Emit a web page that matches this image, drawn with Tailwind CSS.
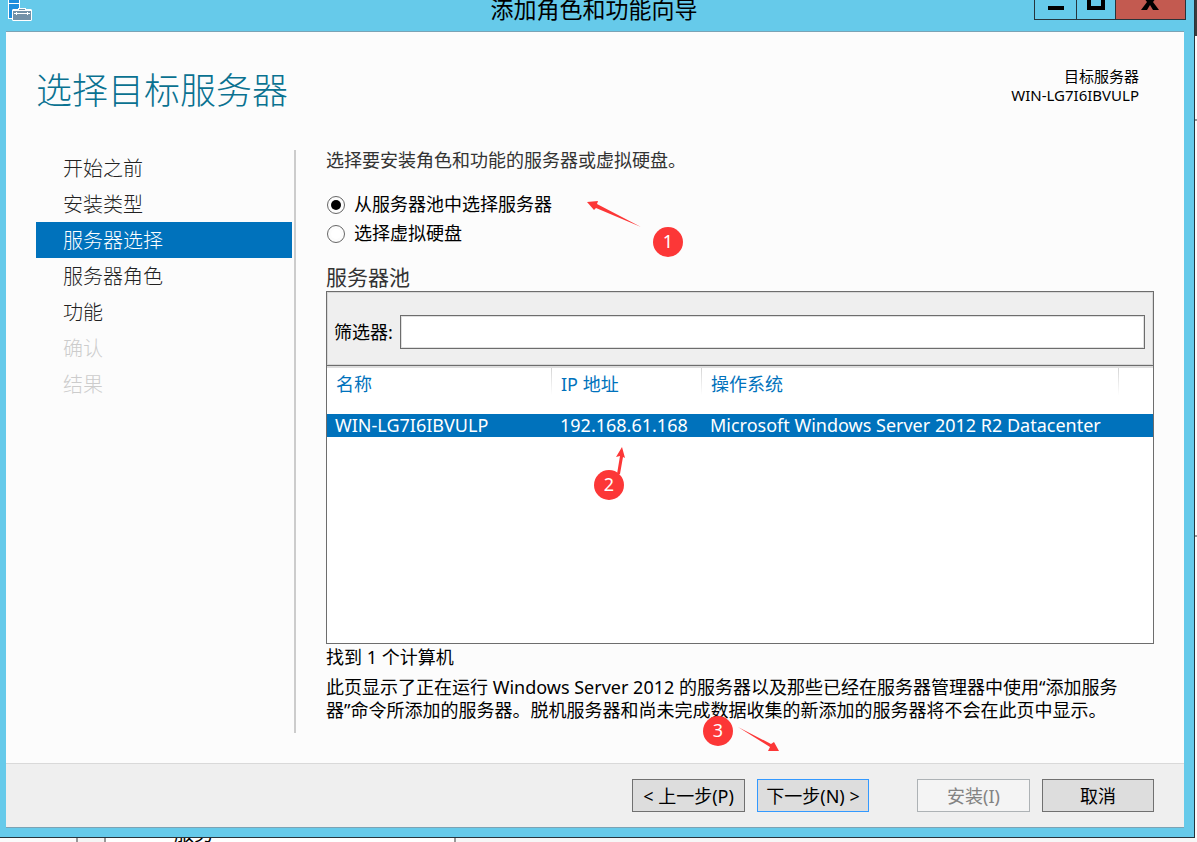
<!DOCTYPE html>
<html lang="zh-CN">
<head>
<meta charset="utf-8">
<title>添加角色和功能向导</title>
<script src="https://cdn.jsdelivr.net/npm/@tailwindcss/browser@4"></script>
</head>
<body class="relative flex h-screen flex-col overflow-hidden bg-[#fbfbfb] font-['Noto_Sans','Noto_Sans_CJK_SC',sans-serif] text-lg text-black">
  <div class="absolute top-0 right-0 h-9 w-[2px] bg-[#3c3c3c]"></div>
  <div class="absolute top-[119px] right-0 h-[2px] w-[2px] bg-[#999]"></div>
  <div class="absolute top-[535px] right-0 h-[2px] w-[2px] bg-[#999]"></div>

  <div class="mr-[2px] flex min-h-0 flex-1 flex-col border-r border-b border-[#26343c] bg-[#66caea]">
    <!-- Title bar -->
    <header class="grid h-[31px] shrink-0 grid-cols-[1fr_auto_1fr] items-start pr-[6px]">
      <svg class="ml-2 h-[22px] w-6" viewBox="0 0 24 22" aria-hidden="true">
        <path d="M0 0h12v19H0z" fill="#fff"/>
        <path d="M1 0h10v3H1zM1 4h10v14H1z" fill="#1e8ede"/>
        <path d="M4 10l1-1h5V8h8v1h5l1 1v10l-1 1H5l-1-1z" fill="#fff"/>
        <path d="M11 9h6v1h-6zM5 11h18v9H5z" fill="#7391a8"/>
        <path d="M6 13h16v1H6zM8 12h1v3H8zM19 12h1v3h-1z" fill="#fff"/>
      </svg>
      <h1 class="text-[23px] leading-[19px]">添加角色和功能向导</h1>
      <div class="mr-[2px] flex h-5 justify-self-end border-x border-b border-[#26343c]">
        <button type="button" aria-label="最小化" class="w-[42px] border-r border-[#26343c]">
          <svg class="h-[19px] w-full" viewBox="0 0 41 19"><path d="M13 6h16v4H13z"/></svg>
        </button>
        <button type="button" aria-label="最大化" class="w-[39px] border-r border-[#26343c]">
          <svg class="h-[19px] w-full" viewBox="0 0 38 19"><path d="M10-6h18v16H10zM14-2v8h10v-8z" fill-rule="evenodd"/></svg>
        </button>
        <button type="button" aria-label="关闭" class="w-[69px] bg-[#c35a50]">
          <svg class="h-[19px] w-full" viewBox="0 0 69 19"><path d="M25-6h6l3 6 3-6h6l-6 8 6 8h-6l-3-5-3 5h-6l6-8z"/></svg>
        </button>
      </div>
    </header>

    <!-- Wizard page -->
    <div class="relative mr-[10px] mb-[9px] ml-[6px] flex min-h-0 flex-1 flex-col border-y border-[#7ba3b5] bg-[#fcfcfc]">
      <div class="flex h-[118px] shrink-0 items-start justify-between pr-[45px] pl-[30px]">
        <h2 class="pt-9 text-4xl leading-[46px] font-light text-[#0a7291]">选择目标服务器</h2>
        <p class="pt-[35px] text-right text-[15px] leading-[19px]">目标服务器<br>WIN-LG7I6IBVULP</p>
      </div>

      <div class="flex min-h-0 flex-1 px-[30px]">
        <nav class="mb-[30px] w-[260px] shrink-0 border-r-2 border-[#ccc] pr-[2px]">
          <ul class="text-xl leading-[34px] font-light text-[#222]">
            <li><a href="#" class="block pt-[2px] pl-[27px]">开始之前</a></li>
            <li><a href="#" class="block pt-[2px] pl-[27px]">安装类型</a></li>
            <li><a href="#" aria-current="step" class="block bg-[#0072bc] pt-[2px] pl-[27px] text-white">服务器选择</a></li>
            <li><a href="#" class="block pt-[2px] pl-[27px]">服务器角色</a></li>
            <li><a href="#" class="block pt-[2px] pl-[27px]">功能</a></li>
            <li><a aria-disabled="true" class="block pt-[2px] pl-[27px] text-[#ccc]">确认</a></li>
            <li><a aria-disabled="true" class="block pt-[2px] pl-[27px] text-[#ccc]">结果</a></li>
          </ul>
        </nav>

        <main class="ml-[30px] flex min-w-0 flex-1 flex-col pb-[41px]">
          <p class="leading-5 text-[#333]">选择要安装角色和功能的服务器或虚拟硬盘。</p>
          <fieldset class="mt-5 leading-[29px]">
            <label class="flex items-center gap-[9px]">
              <input type="radio" name="source" checked class="ml-[1px] size-[18px] appearance-none rounded-full border border-[#666] bg-white bg-clip-content p-[3px] checked:bg-black">
              从服务器池中选择服务器
            </label>
            <label class="flex items-center gap-[9px]">
              <input type="radio" name="source" class="ml-[1px] size-[18px] appearance-none rounded-full border border-[#666] bg-white bg-clip-content p-[3px] checked:bg-black">
              选择虚拟硬盘
            </label>
          </fieldset>
          <h3 class="mt-4 text-[21px] leading-[26px] text-[#333]">服务器池</h3>

          <section class="mt-[1px] min-h-0 flex-1 border border-[#6d6d6d] bg-white">
            <div class="flex h-[74px] items-center border-b border-[#6d6d6d] bg-[#efefef] pt-[6px] pr-2 pl-[7px] inset-ring inset-ring-[#d8d8d8]">
              <label for="filter" class="w-[66px] shrink-0">筛选器:</label>
              <input id="filter" type="text" class="h-[34px] min-w-0 flex-1 border border-[#6d6d6d] bg-white px-2 inset-ring inset-ring-[#e0e0e0]">
            </div>
            <table class="w-full table-fixed border-collapse text-left">
              <colgroup><col class="w-[225px]"><col class="w-[150px]"><col><col class="w-[34px]"></colgroup>
              <thead class="border-t-2 border-[#ddd] text-[#0072bc]">
                <tr class="h-[47px] align-top leading-[33px]">
                  <th class="bg-linear-to-b from-[#d5d5d5] to-white to-60% bg-[length:1px_100%] bg-right bg-no-repeat pl-[9px] font-normal">名称</th>
                  <th class="bg-linear-to-b from-[#d5d5d5] to-white to-60% bg-[length:1px_100%] bg-right bg-no-repeat pl-[9px] font-normal">IP 地址</th>
                  <th class="bg-linear-to-b from-[#d5d5d5] to-white to-60% bg-[length:1px_100%] bg-right bg-no-repeat pl-[9px] font-normal">操作系统</th>
                  <td></td>
                </tr>
              </thead>
              <tbody>
                <tr class="h-[23px] bg-[#0072bc] leading-[23px] whitespace-nowrap text-white">
                  <td class="pl-2">WIN-LG7I6IBVULP</td>
                  <td class="pl-2">192.168.61.168</td>
                  <td class="pl-2">Microsoft Windows Server 2012 R2 Datacenter</td>
                  <td></td>
                </tr>
              </tbody>
            </table>
          </section>

          <p class="mt-[2px] leading-[23px]">找到 1 个计算机</p>
          <p class="mt-[7px] leading-[23px]">此页显示了正在运行 Windows Server 2012 的服务器以及那些已经在服务器管理器中使用“添加服务<br>器”命令所添加的服务器。脱机服务器和尚未完成数据收集的新添加的服务器将不会在此页中显示。</p>
        </main>
      </div>

      <footer class="flex h-16 shrink-0 items-center justify-end gap-3 border-t border-[#d9d9d9] bg-[#efefef] pr-[30px]">
        <button type="button" class="h-[33px] w-[113px] border border-[#707070] bg-[#ddd]">&lt; 上一步(P)</button>
        <button type="button" class="h-[33px] w-[112px] border border-[#3399ff] bg-[#ddd]">下一步(N) &gt;</button>
        <button type="button" disabled class="ml-9 h-[33px] w-[113px] border border-[#adb2b5] bg-[#f4f4f4] text-[#838383]">安装(I)</button>
        <button type="button" class="h-[33px] w-[112px] border border-[#707070] bg-[#ddd]">取消</button>
      </footer>

      <!-- Step annotations -->
      <svg class="pointer-events-none absolute top-0 left-0 h-full w-full" fill="#fc3737" aria-hidden="true">
        <g transform="translate(-6 -32)">
          <path d="M587 202l11-1-1 3 44 23-45-19-2 2z"/>
          <path d="M622 447l3 11-2-1-3 17h-3l3-18-4 1z"/>
          <path d="M738 727l33 17 3-2 5 9h-11l2-4z"/>
        </g>
      </svg>
      <span class="absolute top-[195px] left-[647px] size-[30px] rounded-full bg-[#fc3737] text-center leading-7 text-white">1</span>
      <span class="absolute top-[438px] left-[588px] size-[30px] rounded-full bg-[#fc3737] text-center leading-7 text-white">2</span>
      <span class="absolute top-[684px] left-[697px] size-[30px] rounded-full bg-[#fc3737] text-center leading-7 text-white">3</span>
    </div>
  </div>

  <!-- Strip of the window behind -->
  <div class="flex h-1 shrink-0 overflow-hidden">
    <div class="ml-[76px] w-[30px] shrink-0 border-x-2 border-[#999] bg-[#f5f5f5]"></div>
    <div class="flex w-[350px] shrink-0 items-end border-r-2 border-[#999] bg-white pl-[68px] text-xl leading-4">服务</div>
    <div class="flex-1 bg-[#f7f7f7]"></div>
  </div>
</body>
</html>
